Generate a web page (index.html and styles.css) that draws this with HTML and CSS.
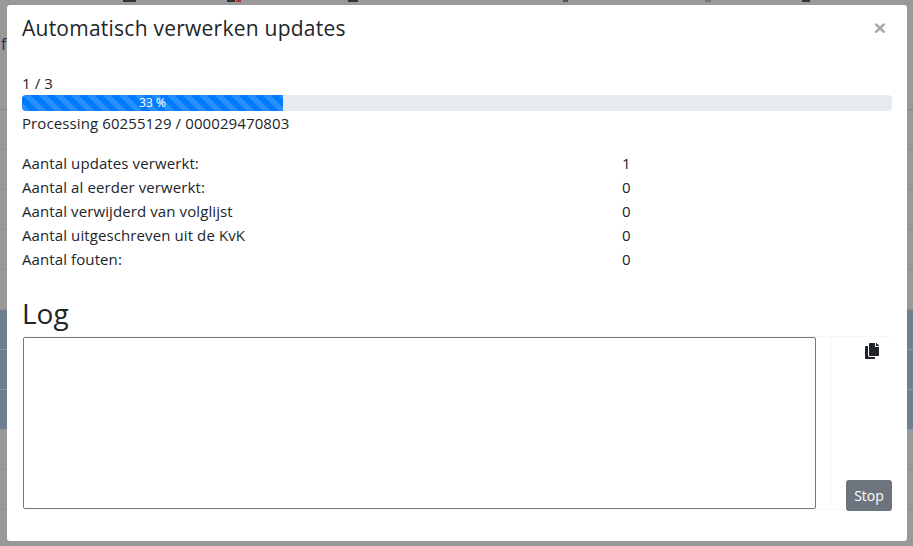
FILE: index.html
```html
<!DOCTYPE html>
<html>
<head>
    <title>Automatisch verwerken updates</title>
    <meta charset="UTF-8">
    <link rel="stylesheet" href="styles.css">
</head>
<body>
    <!-- pagina achter de modal -->
    <div class="page">
        <div class="topbar">
            <span class="mark mark-a"></span>
            <span class="mark mark-b"></span>
            <span class="mark mark-red"></span>
            <span class="mark mark-c"></span>
            <span class="mark mark-d"></span>
            <span class="mark mark-e"></span>
            <span class="mark mark-f"></span>
        </div>
        <div class="row row-first">f</div>
        <div class="row"></div>
        <div class="row"></div>
        <div class="row"></div>
        <div class="row"></div>
        <div class="row"></div>
        <div class="row row-blue"></div>
        <div class="row row-blue"></div>
        <div class="row row-blue"></div>
        <div class="row"></div>
        <div class="row"></div>
        <div class="row"></div>
    </div>

    <div class="modal">
        <div class="modal-header">
            <h5 class="modal-title">Automatisch verwerken updates</h5>
            <span class="close">&times;</span>
        </div>
        <div class="modal-body">
            <div class="count">1 / 3</div>
            <div class="progress">
                <div class="progress-bar">33 %</div>
            </div>
            <div class="status">Processing 60255129 / 000029470803</div>
            <div class="stats">
                <div class="stat"><span>Aantal updates verwerkt:</span><span>1</span></div>
                <div class="stat"><span>Aantal al eerder verwerkt:</span><span>0</span></div>
                <div class="stat"><span>Aantal verwijderd van volglijst</span><span>0</span></div>
                <div class="stat"><span>Aantal uitgeschreven uit de KvK</span><span>0</span></div>
                <div class="stat"><span>Aantal fouten:</span><span>0</span></div>
            </div>
            <h3 class="log-title">Log</h3>
            <div class="log-row">
                <div class="log-cell">
                    <textarea class="log"></textarea>
                </div>
                <div class="log-actions">
                    <svg class="copy-icon" viewBox="0 0 448 512" width="14" height="16">
                        <path d="M320 448v40c0 13.255-10.745 24-24 24H24c-13.255 0-24-10.745-24-24V120c0-13.255 10.745-24 24-24h72v296c0 30.879 25.121 56 56 56h168zm0-344V0H152c-13.255 0-24 10.745-24 24v368c0 13.255 10.745 24 24 24h272c13.255 0 24-10.745 24-24V128H344c-13.200 0-24-10.800-24-24zm120.971-31.029L375.029 7.029A24 24 0 0 0 358.059 0H352v96h96v-6.059a24 24 0 0 0-7.029-16.970z"/>
                    </svg>
                    <button class="btn-stop">Stop</button>
                </div>
            </div>
        </div>
    </div>
</body>
</html>
```
FILE: styles.css
```css
* {
    box-sizing: border-box;
}
body {
    margin: 0;
    height: 546px;
    overflow: hidden;
    background-color: #999999;
    font-family: "Open Sans", "Noto Sans", sans-serif;
    color: #212529;
}
.topbar {
    display: flex;
    height: 3px;
}
.mark {
    height: 2px;
    background-color: #333333;
}
.mark-a {
    width: 13px;
    margin-left: 123px;
}
.mark-b {
    width: 8px;
    margin-left: 91px;
}
.mark-red {
    width: 5px;
    margin-left: 1px;
    background-color: #a83a3a;
}
.mark-c {
    width: 10px;
    margin-left: 107px;
}
.mark-d {
    width: 5px;
    margin-left: 205px;
    background-color: #3d5a66;
}
.mark-e {
    width: 6px;
    margin-left: 137px;
    background-color: #777777;
}
.mark-f {
    width: 8px;
    margin-left: 91px;
}
.row {
    height: 40px;
    border-bottom: 1px solid #8f8f8f;
}
.row-first {
    height: 107px;
    padding: 31px 0 0 1px;
    border-bottom-color: #868686;
    color: #1c2b5a;
    font-size: 16px;
    line-height: 20px;
}
.row-blue {
    background-color: #6f7f8f;
    border-bottom-color: #8a98a6;
}
.modal {
    position: absolute;
    left: 7px;
    top: 5px;
    width: 900px;
    height: 536px;
    background-color: #ffffff;
    border-radius: 3px;
}
.modal-header {
    display: flex;
    justify-content: space-between;
    align-items: center;
    height: 46px;
    padding: 0 21px 0 15px;
}
.modal-title {
    margin: 0;
    font-size: 21px;
    font-weight: 400;
    letter-spacing: .24px;
    line-height: 30px;
}
.close {
    font-family: "Liberation Sans", sans-serif;
    font-size: 21px;
    font-weight: 700;
    color: #a6a6a6;
}
.modal-body {
    padding: 24px 15px 0;
    font-size: 15px;
    letter-spacing: .1px;
    line-height: 24px;
}
.count {
    height: 20px;
    line-height: 16px;
}
.progress {
    height: 16px;
    background-color: #e9ecef;
    border-radius: 4px;
    overflow: hidden;
}
.progress-bar {
    width: 30%;
    height: 100%;
    color: #ffffff;
    font-size: 12px;
    font-weight: 500;
    letter-spacing: 0;
    line-height: 16px;
    text-align: center;
    background-color: #007bff;
    background-image: linear-gradient(45deg, rgba(255,255,255,.15) 25%, transparent 25%, transparent 50%, rgba(255,255,255,.15) 50%, rgba(255,255,255,.15) 75%, transparent 75%, transparent);
    background-size: 16px 16px;
}
.status {
    line-height: 24px;
}
.stats {
    margin-top: 16px;
}
.stat {
    display: flex;
}
.stat span:first-child {
    width: 600px;
}
.log-title {
    margin: 20px 0 0;
    font-size: 28px;
    font-weight: 400;
    letter-spacing: 0;
    line-height: 45px;
}
.log-row {
    display: flex;
    height: 174px;
    border-top: 1px solid #f8f8f8;
    border-bottom: 1px solid #f8f8f8;
}
.log-cell {
    width: 810px;
    padding-right: 15px;
    border-right: 1px solid #f8f8f8;
}
.log {
    display: block;
    width: 793px;
    height: 172px;
    margin-left: 1px;
    border: 1px solid #767676;
    border-radius: 2px;
    background-color: #ffffff;
    resize: none;
}
.log-actions {
    flex: 1;
    display: flex;
    flex-direction: column;
    align-items: flex-end;
    justify-content: space-between;
}
.copy-icon {
    margin: 6px 13px 0 0;
    fill: #212529;
}
.btn-stop {
    width: 46px;
    height: 31px;
    margin-bottom: -2px;
    padding: 0;
    border: none;
    border-radius: 3px;
    background-color: #6c757d;
    color: #ffffff;
    font-family: inherit;
    font-size: 14px;
}
```
